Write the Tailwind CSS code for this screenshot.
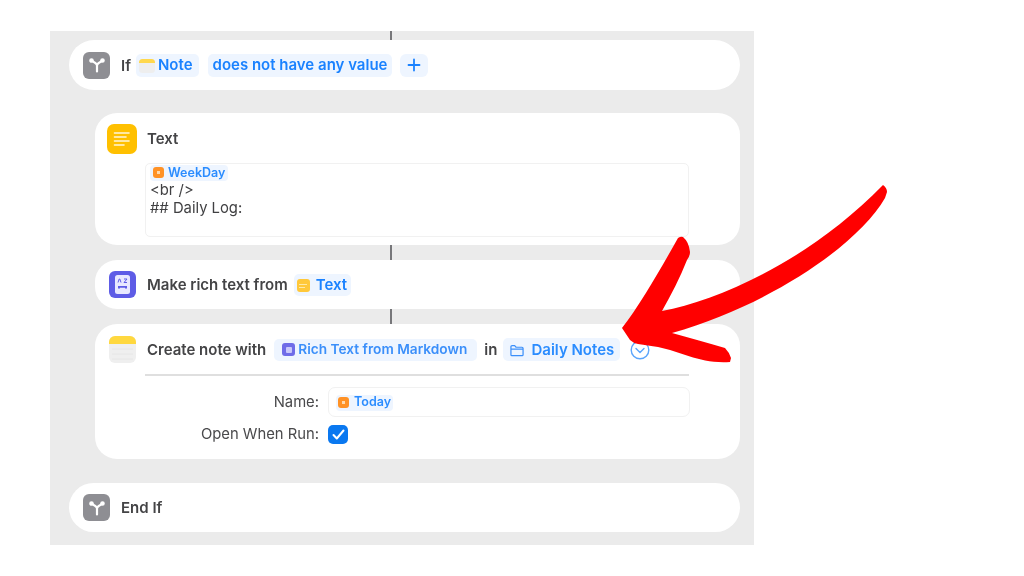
<!DOCTYPE html>
<html lang="en">
<head>
<meta charset="utf-8">
<script src="https://cdn.jsdelivr.net/npm/@tailwindcss/browser@4"></script>
<title>Shortcut</title>
</head>
<body class="bg-white">
<div class="relative w-[1024px] h-[576px] overflow-hidden bg-white font-['Inter','Liberation_Sans',sans-serif] text-[15px] font-semibold text-[#444446]">
  <div class="absolute left-[50px] top-[31px] w-[704px] h-[514px] bg-[#ebebeb] pl-[19px] pr-[14px] flex flex-col blur-[0.5px]">
    <div class="w-[2px] h-[9px] bg-[#77777a] ml-[321px]"></div>

    <!-- If -->
    <div class="h-[50px] w-[671px] rounded-[25px] bg-white flex items-center pl-[14px]">
      <div class="w-[27px] h-[27px] rounded-[6px] bg-[#8e8e93] flex items-center justify-center">
        <svg width="18" height="18" viewBox="0 0 18 18" fill="none" stroke="#fff" stroke-width="2.200" stroke-linecap="round" stroke-linejoin="round"><path d="M9 15.500V9.500Q9 8 7 6.800L3.500 4.500M9 9.500Q9 8 11 6.800L14.500 4.500"/><circle cx="3.500" cy="4.500" r="1.200" fill="#fff"/><circle cx="14.500" cy="4.500" r="1.200" fill="#fff"/></svg>
      </div>
      <span class="ml-[11px] pt-[2px]">If</span>
      <span class="ml-[5px] h-[23px] pl-[3px] pr-[6px] pt-[1px] rounded-[5px] bg-[#eef5ff] flex items-center gap-[3px] text-[#1a82ff]">
        <svg width="16" height="16" viewBox="0 0 16 16"><rect x="0" y="1" width="16" height="14" rx="3.500" fill="#eeeeee"/><path d="M0 5V4.500A3.500 3.500 0 0 1 3.500 1H12.500A3.500 3.500 0 0 1 16 4.500V5Z" fill="#ffd84d"/></svg>
        Note
      </span>
      <span class="ml-[9px] h-[23px] px-[5px] pt-[1px] rounded-[5px] bg-[#eef5ff] flex items-center text-[#1a82ff]">does not have any value</span>
      <span class="ml-[8px] w-[28px] h-[23px] rounded-[6px] bg-[#eef5ff] flex items-center justify-center">
        <svg width="14" height="14" viewBox="0 0 14 14" fill="none" stroke="#1a82ff" stroke-width="1.800" stroke-linecap="round"><path d="M7 1.500V12.500M1.500 7H12.500"/></svg>
      </span>
    </div>

    <!-- Text -->
    <div class="mt-[23px] ml-[26px] w-[645px] h-[132px] rounded-[22px] bg-white pl-[12px] pt-[11px] flex flex-col">
      <div class="flex items-center h-[30px]">
        <div class="w-[30px] h-[30px] rounded-[7px] bg-[#ffc000] flex items-center justify-center">
          <svg width="18" height="16" viewBox="0 0 18 16" fill="none" stroke="#fff" stroke-opacity=".85" stroke-width="1.600" stroke-linecap="round"><path d="M1.500 2H16M1.500 6H13M1.500 10H16M1.500 14H11"/></svg>
        </div>
        <span class="ml-[10px]">Text</span>
      </div>
      <div class="mt-[9px] ml-[38px] w-[544px] h-[74px] rounded-[5px] border border-[#f1f1f1] pl-[4px] text-[14.800px] text-[#404042] font-normal leading-[18px]">
        <div class="h-[17px] flex items-center">
          <span class="h-[16px] px-[3px] rounded-[4px] bg-[#eef5ff] flex items-center gap-[4px] text-[12.500px] font-semibold text-[#2a8cff]">
            <span class="w-[11px] h-[11px] rounded-[3px] bg-[#ff9226] flex items-center justify-center"><span class="w-[3px] h-[3px] bg-[#ffd9ad]"></span></span>WeekDay
          </span>
        </div>
        <div>&lt;br /&gt;</div>
        <div>## Daily Log:</div>
      </div>
    </div>

    <div class="w-[2px] h-[15px] bg-[#77777a] ml-[321px]"></div>

    <!-- Make rich text -->
    <div class="ml-[26px] w-[645px] h-[49px] rounded-[22px] bg-white flex items-center pl-[14px]">
      <div class="w-[27px] h-[27px] rounded-[6px] bg-[#5e5ce6] flex items-center justify-center">
        <svg width="15" height="19" viewBox="0 0 15 19"><rect width="15" height="19" rx="2.500" fill="#e8e8ff"/><path d="M3 7.500L4.200 4H4.800L6 7.500M9 4H12L9 7.500H12" fill="none" stroke="#5e5ce6" stroke-width="1"/><path d="M3 13.500V11H12V13.500H10V12.800H5V13.500Z" fill="#5e5ce6"/></svg>
      </div>
      <span class="ml-[11px] pt-[2px]">Make rich text from</span>
      <span class="ml-[6px] h-[22px] pl-[3px] pr-[4px] pt-[2px] rounded-[5px] bg-[#eef5ff] flex items-center gap-[6px] text-[#1a82ff]">
        <span class="w-[13px] h-[13px] rounded-[3px] bg-[#ffc83a] flex flex-col justify-center gap-[2px] pl-[2px]"><span class="w-[8px] h-[1px] bg-[#ffe9a8]"></span><span class="w-[6px] h-[1px] bg-[#ffe9a8]"></span></span>Text
      </span>
    </div>

    <div class="w-[2px] h-[15px] bg-[#77777a] ml-[321px]"></div>

    <!-- Create note -->
    <div class="ml-[26px] w-[645px] h-[135px] rounded-[22px] bg-white pl-[14px] pt-[12px] flex flex-col">
      <div class="flex items-center h-[27px]">
        <svg width="27" height="27" viewBox="0 0 27 27"><rect width="27" height="27" rx="6" fill="#efefef"/><path d="M0 8V6A6 6 0 0 1 6 0H21A6 6 0 0 1 27 6V8Z" fill="#ffd83f"/><path d="M3 13H24M3 18H24M3 23H24" stroke="#e6e6e6"/></svg>
        <span class="ml-[11px] pt-[2px]">Create note with</span>
        <span class="ml-[8px] h-[22px] pl-[8px] pr-[10px] rounded-[5px] bg-[#eef5ff] flex items-center gap-[3px] text-[13.700px] text-[#3b8ffa]">
          <span class="w-[13px] h-[13px] rounded-[3px] bg-[#6f6ce8] flex items-center justify-center"><span class="w-[6px] h-[6px] rounded-[1px] bg-[#c9c8fa]"></span></span>Rich Text from Markdown
        </span>
        <span class="ml-[7px] pt-[2px]">in</span>
        <span class="ml-[6px] h-[23px] pl-[7px] pr-[6px] pt-[2px] rounded-[5px] bg-[#eef5ff] flex items-center gap-[7px] text-[#2a8cff]">
          <svg width="14" height="13" viewBox="0 0 15 13" fill="none" stroke="#3b8ffa" stroke-width="1.300" stroke-linejoin="round"><path d="M1 11V2.500A1.200 1.200 0 0 1 2.200 1.300H5L6.500 3H12.800A1.200 1.200 0 0 1 14 4.200V11A1 1 0 0 1 13 12H2A1 1 0 0 1 1 11ZM1 5H14"/></svg>
          Daily Notes
        </span>
        <svg class="ml-[10px]" width="20" height="20" viewBox="0 0 20 20" fill="none" stroke="#5ba5fb" stroke-width="1.400" stroke-linecap="round" stroke-linejoin="round"><circle cx="10" cy="10" r="8.800"/><path d="M6 8.500L10 12.500L14 8.500"/></svg>
      </div>
      <div class="mt-[11px] ml-[36px] w-[544px] h-[2px] bg-[#dfdfdf]"></div>
      <div class="mt-[11px] ml-[36px] flex items-center h-[30px] w-[545px] relative">
        <span class="absolute right-[371px] text-[14.800px] font-normal text-[#4a4a4c]">Name:</span>
        <div class="ml-[183px] w-[362px] h-[30px] rounded-[7px] border border-[#f1f1f1] flex items-center pl-[7px] pt-[1px]">
          <span class="h-[16px] px-[2px] rounded-[4px] bg-[#eef5ff] flex items-center gap-[5px] text-[12.500px] font-semibold text-[#2a8cff]">
            <span class="w-[11px] h-[11px] rounded-[3px] bg-[#ff9226] flex items-center justify-center"><span class="w-[3px] h-[3px] bg-[#ffd9ad]"></span></span>Today
          </span>
        </div>
      </div>
      <div class="mt-[7px] ml-[36px] flex items-center h-[20px] w-[545px] relative">
        <span class="absolute right-[371px] text-[14.800px] font-normal text-[#4a4a4c] whitespace-nowrap">Open When Run:</span>
        <div class="ml-[183px] w-[20px] h-[19px] rounded-[5px] bg-[#0a78f0] flex items-center justify-center">
          <svg width="13" height="11" viewBox="0 0 13 11" fill="none" stroke="#fff" stroke-width="2" stroke-linecap="round" stroke-linejoin="round"><path d="M1.500 6L4.800 9.500L11.500 1.500"/></svg>
        </div>
      </div>
    </div>

    <!-- End If -->
    <div class="mt-[24px] h-[49px] w-[671px] rounded-[25px] bg-white flex items-center pl-[14px]">
      <div class="w-[27px] h-[27px] rounded-[6px] bg-[#8e8e93] flex items-center justify-center">
        <svg width="18" height="18" viewBox="0 0 18 18" fill="none" stroke="#fff" stroke-width="2.200" stroke-linecap="round" stroke-linejoin="round"><path d="M9 15.500V9.500Q9 8 7 6.800L3.500 4.500M9 9.500Q9 8 11 6.800L14.500 4.500"/><circle cx="3.500" cy="4.500" r="1.200" fill="#fff"/><circle cx="14.500" cy="4.500" r="1.200" fill="#fff"/></svg>
      </div>
      <span class="ml-[11px] pt-[2px]">End If</span>
    </div>
  </div>

  <!-- Hand-drawn arrow over the content -->
  <svg class="absolute left-0 top-0" width="1024" height="576" viewBox="0 0 1024 576">
    <path fill="#ff0000" d="M883 185 Q887 188 887 192 L885 198 C858 245 770 305 672 333 C690 338 708 343 725 348 Q729 352 731 358 L730 362 C700 364 682 352 658 347 C651 346 645 345 638 344 Q633 343 630 340 L622 328 C640 305 660 270 678 238 Q681 236 683 237 Q689 242 690 252 Q690 256 687 260 C680 278 671 295 662 311 C720 300 810 260 883 185Z"/>
  </svg>
</div>
</body>
</html>
